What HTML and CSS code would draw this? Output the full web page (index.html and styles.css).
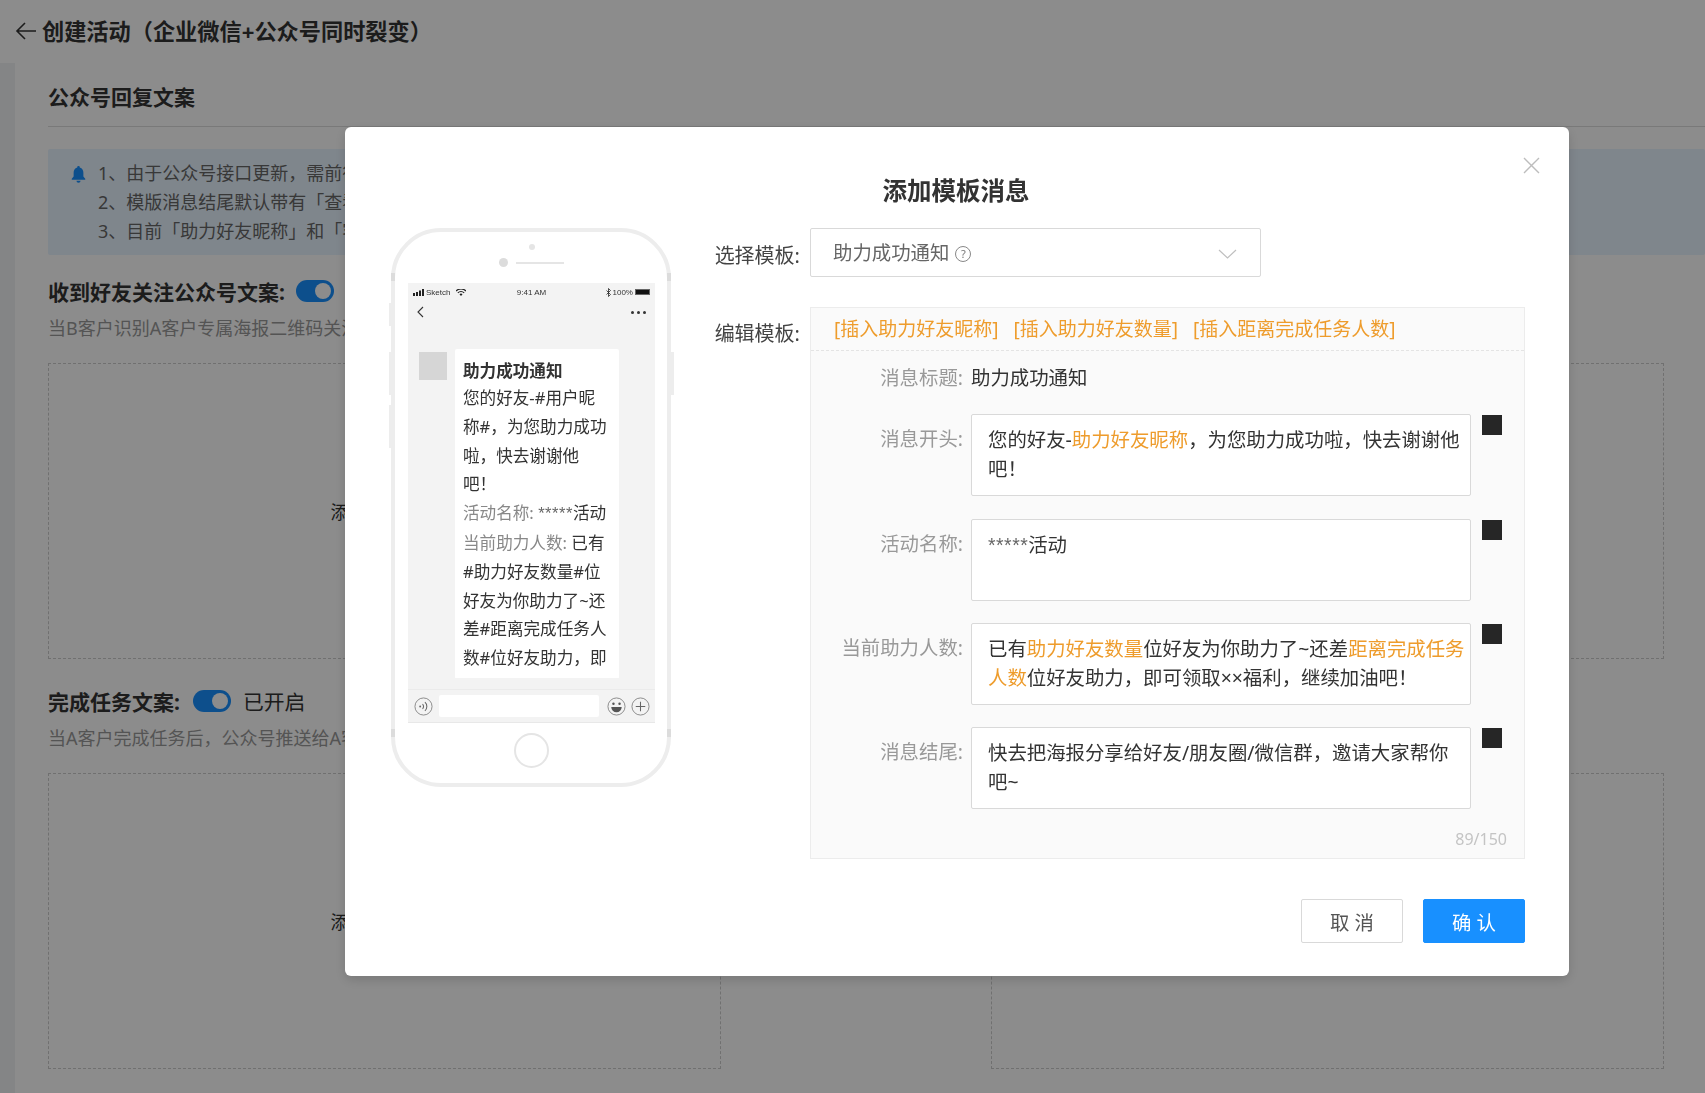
FILE: index.html
```html
<!DOCTYPE html>
<html lang="zh-CN">
<head>
    <meta charset="UTF-8">
    <meta name="viewport" content="width=device-width, initial-scale=1.0">
    <title>创建活动</title>
    <link rel="stylesheet" href="styles.css">
</head>
<body>

    <header class="header">
        <svg class="back-arrow" viewBox="0 0 22 20" width="22" height="20"><path d="M21 10H2M10 2l-8 8 8 8" fill="none" stroke="#333" stroke-width="1.6"/></svg>
        <h1 class="page-title">创建活动（企业微信+公众号同时裂变）</h1>
    </header>

    <div class="layout">
        <div class="sidebar"></div>
        <main class="content">
            <h2 class="section-title">公众号回复文案</h2>

            <div class="notice">
                <svg class="notice-bell" viewBox="0 0 16 18" width="15" height="17"><path d="M8 0a1.4 1.4 0 0 1 1.4 1.5C12 2.2 13.2 4.4 13.2 7v4.2l2 2.4v.9H.8v-.9l2-2.4V7c0-2.6 1.2-4.8 3.8-5.5A1.4 1.4 0 0 1 8 0zM5.8 15.600h4.400a2.200 2.200 0 0 1-4.400 0z" fill="#1890ff"/></svg>
                <div class="notice-text">
                    <p>1、由于公众号接口更新，需前往</p>
                    <p>2、模版消息结尾默认带有「查看</p>
                    <p>3、目前「助力好友昵称」和「客</p>
                </div>
            </div>

            <div class="switch-row">
                <span class="switch-title">收到好友关注公众号文案:</span>
                <span class="toggle"></span>
            </div>
            <p class="switch-desc">当B客户识别A客户专属海报二维码关注</p>
            <div class="upload-grid">
                <div class="upload-box">添加模板消息</div>
                <div class="upload-box">添加模板消息</div>
            </div>

            <div class="switch-row switch-row-second">
                <span class="switch-title">完成任务文案:</span>
                <span class="toggle"></span>
                <span class="switch-state">已开启</span>
            </div>
            <p class="switch-desc">当A客户完成任务后，公众号推送给A客</p>
            <div class="upload-grid">
                <div class="upload-box">添加模板消息</div>
                <div class="upload-box">添加模板消息</div>
            </div>
        </main>
    </div>

    <div class="mask">
        <div class="modal">
            <svg class="modal-close" viewBox="0 0 17 17" width="17" height="17"><path d="M1 1l15 15M16 1L1 16" stroke="#bdbdbd" stroke-width="1.4" fill="none"/></svg>
            <h3 class="modal-title">添加模板消息</h3>

            <div class="modal-body">
                <div class="phone">
                    <i class="phone-band band-tl"></i><i class="phone-band band-tr"></i><i class="phone-band band-bl"></i><i class="phone-band band-br"></i>
                    <i class="phone-key key-1"></i><i class="phone-key key-2"></i><i class="phone-key key-3"></i><i class="phone-key key-4"></i>
                    <div class="phone-top">
                        <span class="phone-dot-small"></span>
                        <div class="phone-speaker-row"><span class="phone-dot"></span><span class="phone-speaker"></span></div>
                    </div>
                    <div class="screen">
                        <div class="status-bar">
                            <span class="status-left">
                                <svg viewBox="0 0 11 7" width="11" height="7"><path d="M0 4h2v3H0zM3 3h2v4H3zM6 1.500h2V7H6zM9 0h2v7H9z" fill="#222"/></svg>
                                Sketch
                                <svg class="status-wifi" viewBox="0 0 10 7" width="10" height="7"><path d="M0 2a7 7 0 0 1 10 0M1.800 3.800a4.500 4.500 0 0 1 6.400 0" fill="none" stroke="#222" stroke-width="1.100"/><path d="M3.500 5.300a2 2 0 0 1 3 0L5 7z" fill="#222"/></svg>
                            </span>
                            <span class="status-time">9:41 AM</span>
                            <span class="status-right">
                                <svg viewBox="0 0 5 9" width="5" height="9"><path d="M.5 2.500l4 4L2.500 8.500v-8l2 2-4 4" fill="none" stroke="#222" stroke-width=".8"/></svg>
                                100%
                                <span class="battery"></span>
                            </span>
                        </div>
                        <div class="chat-nav">
                            <svg viewBox="0 0 7 12" width="7" height="12"><path d="M6 1L1 6l5 5" fill="none" stroke="#333" stroke-width="1.100"/></svg>
                            <span class="chat-more"><i></i><i></i><i></i></span>
                        </div>
                        <div class="chat-body">
                            <div class="avatar"></div>
                            <div class="bubble">
                                <div class="bubble-title">助力成功通知</div>
                                <div class="bubble-line">您的好友-#用户昵称#，为您助力成功啦，快去谢谢他吧！</div>
                                <div class="bubble-line"><span class="bubble-label">活动名称:</span> <span class="stars">*****</span>活动</div>
                                <div class="bubble-line"><span class="bubble-label">当前助力人数:</span> 已有#助力好友数量#位好友为你助力了~还差#距离完成任务人数#位好友助力，即</div>
                            </div>
                        </div>
                        <div class="chat-input">
                            <svg viewBox="0 0 20 20" width="19" height="19"><circle cx="10" cy="10" r="9" fill="none" stroke="#888"/><circle cx="6.500" cy="10" r="1" fill="#666"/><path d="M9 7.500a3.500 3.500 0 0 1 0 5M11.500 5.500a6 6 0 0 1 0 9" fill="none" stroke="#666" stroke-width="1.100"/></svg>
                            <div class="chat-field"></div>
                            <svg viewBox="0 0 20 20" width="19" height="19"><circle cx="10" cy="10" r="9" fill="none" stroke="#888"/><circle cx="6.800" cy="7" r="1.300" fill="#555"/><circle cx="13.200" cy="7" r="1.300" fill="#555"/><path d="M4.500 10.500h11a5.500 5.500 0 0 1-11 0z" fill="#555"/></svg>
                            <svg viewBox="0 0 20 20" width="19" height="19"><circle cx="10" cy="10" r="9" fill="none" stroke="#888"/><path d="M10 5v10M5 10h10" stroke="#666" stroke-width="1.100"/></svg>
                        </div>
                    </div>
                    <div class="phone-bottom"><span class="home-key"></span></div>
                </div>

                <div class="form">
                    <div class="form-row select-row">
                        <label class="form-label">选择模板:</label>
                        <div class="select">
                            <span class="select-value">助力成功通知</span>
                            <span class="help-icon">?</span>
                            <svg class="select-arrow" viewBox="0 0 19 10" width="19" height="10"><path d="M1 1l8.500 8L18 1" fill="none" stroke="#bfbfbf" stroke-width="1.200"/></svg>
                        </div>
                    </div>
                    <div class="form-row">
                        <label class="form-label edit-label">编辑模板:</label>
                        <div class="panel">
                            <div class="panel-head">
                                <a href="#" class="insert-link">[插入助力好友昵称]</a>
                                <a href="#" class="insert-link">[插入助力好友数量]</a>
                                <a href="#" class="insert-link">[插入距离完成任务人数]</a>
                            </div>
                            <div class="panel-body">
                                <div class="field field-plain">
                                    <span class="field-label">消息标题:</span>
                                    <span class="field-text">助力成功通知</span>
                                </div>
                                <div class="field">
                                    <span class="field-label">消息开头:</span>
                                    <div class="field-box">您的好友-<em>助力好友昵称</em>，为您助力成功啦，快去谢谢他吧！</div>
                                    <span class="color-swatch"></span>
                                </div>
                                <div class="field">
                                    <span class="field-label">活动名称:</span>
                                    <div class="field-box"><span class="stars">*****</span>活动</div>
                                    <span class="color-swatch"></span>
                                </div>
                                <div class="field">
                                    <span class="field-label">当前助力人数:</span>
                                    <div class="field-box">已有<em>助力好友数量</em>位好友为你助力了~还差<em>距离完成任务人数</em>位好友助力，即可领取××福利，继续加油吧！</div>
                                    <span class="color-swatch"></span>
                                </div>
                                <div class="field">
                                    <span class="field-label">消息结尾:</span>
                                    <div class="field-box">快去把海报分享给好友/朋友圈/微信群，邀请大家帮你吧~</div>
                                    <span class="color-swatch"></span>
                                </div>
                                <div class="counter">89/150</div>
                            </div>
                        </div>
                    </div>
                </div>
            </div>

            <div class="modal-footer">
                <button class="btn">取 消</button>
                <button class="btn btn-primary">确 认</button>
            </div>
        </div>
    </div>

</body>
</html>
```

FILE: styles.css
```css
/* base */
body {
    font-family: "Noto Sans", "Noto Sans CJK SC", sans-serif;
    margin: 0;
    background-color: #f0f2f5;
    color: #333;
    height: 1093px;
    overflow: hidden;
}
h1, h2, h3, p { margin: 0; }
.stars { font-family: "Liberation Sans", sans-serif; letter-spacing: 0.5px; color: #666; }

/* page behind the modal */
.header {
    display: flex;
    align-items: center;
    height: 63px;
    padding: 0 0 2px 15px;
    background-color: #fff;
    box-sizing: border-box;
}
.back-arrow { margin-right: 5px; }
.page-title { font-size: 22.2px; font-weight: 700; color: #333; }

.layout { display: flex; }
.sidebar { width: 15px; flex-shrink: 0; }
.content {
    flex: 1;
    height: 1030px;
    padding-left: 33px;
    background-color: #fff;
}
.section-title {
    height: 63px;
    line-height: 68px;
    font-size: 21px;
    font-weight: 700;
    border-bottom: 1px solid #ddd;
}
.notice {
    display: flex;
    height: 106px;
    margin-top: 22px;
    padding: 10px 0 0 23px;
    background-color: #e8f4ff;
    box-sizing: border-box;
    border-radius: 2px;
}
.notice-bell { margin: 7px 12px 0 0; }
.notice-text p { font-size: 18px; line-height: 29px; color: #666; }

.switch-row { display: flex; align-items: center; height: 30px; margin-top: 21px; }
.switch-row-second { margin-top: 27px; }
.switch-title { font-size: 21px; font-weight: 700; color: #333; }
.toggle {
    position: relative;
    width: 38px;
    height: 22px;
    margin-left: 11px;
    border-radius: 11px;
    background-color: #1890ff;
}
.switch-row-second .toggle { margin-left: 13px; }
.toggle::after {
    content: "";
    position: absolute;
    top: 3px;
    right: 3px;
    width: 16px;
    height: 16px;
    border-radius: 50%;
    background-color: #fff;
}
.switch-state { margin-left: 12px; font-size: 20.8px; color: #333; }
.switch-desc { margin-top: 8px; font-size: 18px; line-height: 28px; color: #999; }

.upload-grid { display: grid; grid-template-columns: 673px 673px; justify-content: space-between; margin: 21px 41px 0 0; }
.upload-box {
    display: flex;
    align-items: center;
    justify-content: center;
    height: 296px;
    border: 1px dashed #ccc;
    box-sizing: border-box;
    font-size: 18px;
}

/* modal */
.mask {
    position: fixed;
    top: 0;
    left: 0;
    right: 0;
    bottom: 0;
    background-color: rgba(0, 0, 0, 0.45);
}
.modal {
    position: relative;
    width: 1224px;
    height: 849px;
    margin: 127px 0 0 345px;
    padding: 48px 44px 0 46px;
    box-sizing: border-box;
    background-color: #fff;
    border-radius: 6px;
    box-shadow: 0 4px 12px rgba(0, 0, 0, 0.15);
}
.modal-close { position: absolute; top: 30px; right: 29px; }
.modal-title {
    height: 53px;
    padding-right: 4px;
    line-height: 31px;
    text-align: center;
    font-size: 24.5px;
    font-weight: 700;
    color: #333;
}
.modal-body { display: flex; gap: 43px; }

/* phone preview */
.phone {
    position: relative;
    width: 280px;
    height: 559px;
    padding: 0 12px 0 13px;
    box-sizing: border-box;
    border: 4px solid #ededed;
    border-radius: 50px;
    flex-shrink: 0;
    background-color: #fff;
}
.phone-band { position: absolute; width: 4px; height: 8px; background-color: #dcdcdc; }
.band-tl { left: -4px; top: 41px; }
.band-tr { right: -4px; top: 41px; }
.band-bl { left: -4px; bottom: 46px; }
.band-br { right: -4px; bottom: 46px; }
.phone-key { position: absolute; width: 3px; background-color: #ededed; }
.key-1 { left: -6px; top: 71px; height: 23px; }
.key-2 { left: -6px; top: 120px; height: 43px; }
.key-3 { left: -6px; top: 173px; height: 43px; }
.key-4 { right: -7px; top: 120px; height: 43px; }
.phone-top { display: flex; flex-direction: column; align-items: center; height: 51px; }
.phone-dot-small { width: 6px; height: 6px; margin-top: 12px; border-radius: 50%; background-color: #e5e5e5; }
.phone-speaker-row { display: flex; align-items: center; gap: 8px; margin-top: 8px; }
.phone-dot { width: 9px; height: 9px; border-radius: 50%; background-color: #dcdcdc; }
.phone-speaker { width: 48px; height: 2px; background-color: #e5e5e5; }

.screen {
    display: flex;
    flex-direction: column;
    height: 440px;
    background-color: #f3f3f3;
    border-bottom: 1px solid #e8e8e8;
    box-sizing: border-box;
}
.status-bar {
    display: flex;
    justify-content: space-between;
    align-items: center;
    height: 18px;
    padding: 0 5px;
    font-family: "Liberation Sans", sans-serif;
    font-size: 8px;
    color: #333;
}
.status-left, .status-right { display: flex; align-items: center; gap: 2px; width: 70px; }
.status-wifi { margin-left: 4px; }
.status-right { justify-content: flex-end; }
.battery { width: 15px; height: 6px; background-color: #111; border: 1px solid #666; box-sizing: border-box; }
.chat-nav {
    display: flex;
    justify-content: space-between;
    align-items: center;
    height: 21px;
    padding: 1px 9px 0 9px;
    box-sizing: border-box;
}
.chat-more { display: flex; gap: 3px; }
.chat-more i { width: 3px; height: 3px; border-radius: 50%; background-color: #333; }
.chat-body {
    flex: 1;
    display: flex;
    align-items: flex-start;
    gap: 8px;
    padding: 27px 0 0 11px;
    overflow: hidden;
    min-height: 0;
}
.avatar { width: 28px; height: 28px; margin-top: 3px; background-color: #d6d6d6; flex-shrink: 0; }
.bubble {
    width: 164px;
    height: 330px;
    padding: 10px 11px 0 8px;
    box-sizing: border-box;
    background-color: #fff;
    border-radius: 2px;
    font-size: 16.6px;
    line-height: 28.8px;
    color: #333;
    overflow: hidden;
}
.bubble-title { font-weight: 700; line-height: 24px; margin-bottom: 1px; }
.bubble-label { color: #888; }
.chat-input {
    display: flex;
    align-items: center;
    height: 33px;
    margin-top: 11px;
    padding-left: 6px;
    border-top: 1px solid #ebebeb;
    box-sizing: border-box;
    gap: 5px;
}
.chat-input svg { flex-shrink: 0; }
.chat-field { width: 160px; height: 22px; margin: 0 3px 0 1px; background-color: #fff; border-radius: 2px; flex-shrink: 0; }
.phone-bottom { display: flex; justify-content: center; padding-top: 10px; }
.home-key { width: 35px; height: 35px; border: 2px solid #e5e5e5; border-radius: 50%; box-sizing: border-box; }

/* form */
.form { flex: 1; font-size: 19.4px; line-height: 28.8px; }
.form-row { display: flex; gap: 10px; }
.form-label { width: 86px; text-align: right; font-size: 20px; color: #444; white-space: nowrap; }
.select-row { margin-bottom: 30px; align-items: center; }
.select-row .form-label { padding-top: 8px; }
.select {
    display: flex;
    align-items: center;
    width: 451px;
    height: 49px;
    padding: 2px 22px 0;
    box-sizing: border-box;
    border: 1px solid #d9d9d9;
    border-radius: 2px;
    color: #666;
}
.help-icon {
    display: flex;
    align-items: center;
    justify-content: center;
    width: 16px;
    height: 16px;
    margin-left: 6px;
    border: 1px solid #888;
    border-radius: 50%;
    box-sizing: border-box;
    font-size: 11px;
    line-height: 1;
    color: #777;
}
.select-arrow { margin-left: auto; margin-right: 1px; }
.edit-label { padding-top: 13px; }

.panel {
    flex: 1;
    height: 552px;
    box-sizing: border-box;
    border: 1px solid #ececec;
    background-color: #fafafa;
}
.panel-head {
    display: flex;
    gap: 15px;
    height: 43px;
    padding: 7px 0 0 23px;
    box-sizing: border-box;
    border-bottom: 1px dashed #e4e4e4;
    font-size: 19px;
}
.insert-link { color: #ee9c2c; text-decoration: none; }
.panel-body { padding-top: 13px; }
.field { display: flex; align-items: flex-start; margin-bottom: 22.4px; }
.field-plain { margin-bottom: 21.5px; }
.field-label { width: 152px; margin-right: 8px; padding-top: 11px; text-align: right; color: #999; white-space: nowrap; box-sizing: border-box; }
.field-plain .field-label { padding-top: 0; }
.field-text { color: #333; }
.field-box {
    width: 500px;
    height: 82px;
    padding: 11px 5.5px 0 16px;
    box-sizing: border-box;
    border: 1px solid #d9d9d9;
    border-radius: 2px;
    background-color: #fff;
    color: #333;
}
.field-box em { font-style: normal; color: #ee9c2c; }
.color-swatch { width: 20px; height: 20px; margin: 1px 0 0 11px; background-color: #262626; }
.counter { margin-top: -7px; padding-right: 17px; text-align: right; font-size: 16px; color: #c4c4c4; }

.modal-footer { display: flex; justify-content: flex-end; gap: 20px; margin-top: 40px; }
.btn {
    width: 102px;
    height: 44px;
    border: 1px solid #d9d9d9;
    border-radius: 2px;
    background-color: #fff;
    font-family: inherit;
    font-size: 19.4px;
    color: #555;
    cursor: pointer;
}
.btn-primary { border-color: #1890ff; background-color: #1890ff; color: #fff; }
```
